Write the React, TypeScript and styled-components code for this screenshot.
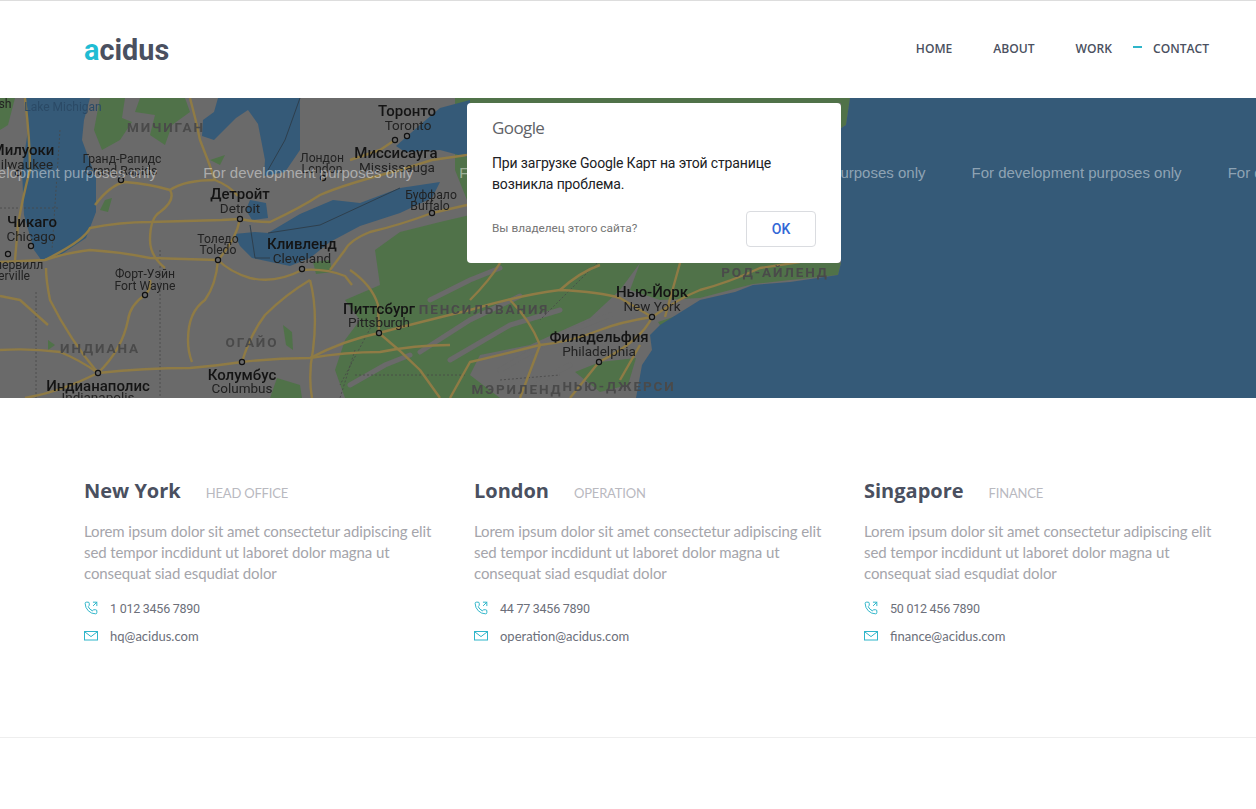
import React, { FC } from "react";
import styled, { createGlobalStyle } from "styled-components";
import { PhoneOutgoing } from "lucide-react";

const GlobalStyle = createGlobalStyle`
  html, body {
    margin: 0;
    padding: 0;
    background: #fff;
  }
`;

const Site = styled.div`
  width: 1256px;
  height: 809px;
  overflow: hidden;
  border-top: 1px solid #dddddd;
  box-sizing: border-box;
  font-family: Lato, sans-serif;
`;

const Header = styled.header`
  height: 97px;
  padding: 0 47px 0 84px;
  display: flex;
  align-items: center;
  justify-content: space-between;
`;

const Logo = styled.div`
  font: 700 28.8px Roboto, sans-serif;
  color: #4a5060;
  span {
    color: #1fbcd3;
  }
`;

const Nav = styled.nav`
  display: flex;
  gap: 41px;
  margin-top: -3px;
`;

const NavItem = styled.a<{ $active?: boolean }>`
  position: relative;
  font: 600 12.1px "Open Sans", sans-serif;
  color: #4a5060;
  ${({ $active }) =>
    $active &&
    `
    &::before {
      content: "";
      position: absolute;
      left: -20px;
      top: 6px;
      width: 9px;
      height: 2px;
      background: #2fb5c9;
    }
  `}
`;

const MapSection = styled.section`
  position: relative;
  height: 300px;
  overflow: hidden;
  background: #6a6a6a;
  svg {
    display: block;
    filter: blur(0.3px);
  }
`;

const DevNote = styled.div`
  position: absolute;
  top: 66px;
  left: -53px;
  display: flex;
  gap: 46px;
  white-space: nowrap;
  font: 15px "Liberation Sans", sans-serif;
  color: rgba(255, 255, 255, 0.45);
`;

const Dialog = styled.div`
  position: absolute;
  left: 467px;
  top: 5px;
  width: 374px;
  height: 160px;
  box-sizing: border-box;
  padding: 13px 25px 0;
  background: #fff;
  border-radius: 4px;
  font-family: Roboto, sans-serif;
`;

const GoogleMark = styled.div`
  font: 500 17px "Open Sans", sans-serif;
  letter-spacing: -0.6px;
  color: #5f6368;
  line-height: 23px;
`;

const DialogText = styled.p`
  margin: 14px 0 0;
  font-size: 14px;
  letter-spacing: -0.15px;
  line-height: 21px;
  color: #202124;
`;

const DialogFoot = styled.div`
  margin-top: 16px;
  display: flex;
  align-items: center;
  justify-content: space-between;
`;

const OwnerLink = styled.span`
  margin-bottom: 2px;
  font-size: 11.8px;
  color: #757575;
`;

const OkButton = styled.button`
  width: 70px;
  height: 36px;
  background: #fff;
  border: 1px solid #dadce0;
  border-radius: 4px;
  font: 500 14px Roboto, sans-serif;
  color: #3367d6;
`;

const Offices = styled.section`
  height: 340px;
  box-sizing: border-box;
  padding: 79px 0 0 84px;
  display: grid;
  grid-template-columns: repeat(3, 390px);
  align-content: start;
  border-bottom: 1px solid #eeeeee;
`;

const Office = styled.article`
  padding-right: 30px;
`;

const OfficeHead = styled.div`
  display: flex;
  align-items: baseline;
  gap: 25px;
`;

const City = styled.h3`
  margin: 0;
  font: 700 20px/28px "Open Sans", sans-serif;
  color: #4a5060;
`;

const Role = styled.span`
  font-size: 13px;
  letter-spacing: -0.2px;
  color: #b9b9bf;
`;

const Blurb = styled.p`
  margin: 16px 0 10px;
  font-size: 15px;
  letter-spacing: -0.1px;
  line-height: 21px;
  color: #a5a5ab;
  white-space: pre;
`;

const ContactRow = styled.div`
  display: flex;
  align-items: center;
  gap: 12px;
  height: 28px;
  font-size: 13px;
  color: #6c6f7a;
  svg {
    flex: none;
    width: 14px;
    height: 14px;
    color: #2fb5c9;
  }
`;

const PhoneNumber = styled.span`
  font: 12.5px Roboto, sans-serif;
  letter-spacing: -0.25px;
`;

type LabelKind = "city" | "sub" | "small" | "state" | "lake";

const Label = styled.text<{ $kind: LabelKind }>`
  font-family: Roboto, sans-serif;
  text-anchor: middle;
  font-size: ${({ $kind }) =>
    ({ city: 15, sub: 13.5, small: 12.2, state: 13.5, lake: 12 }[$kind])}px;
  font-weight: ${({ $kind }) => ($kind === "state" ? 700 : $kind === "city" ? 500 : 400)};
  letter-spacing: ${({ $kind }) => ($kind === "state" ? "1.9px" : "0")};
  fill: ${({ $kind }) =>
    $kind === "state"
      ? "#4a4a4a"
      : $kind === "lake"
      ? "#2b4a66"
      : $kind === "city"
      ? "#141414"
      : "#222222"};
`;

const labels: [string, number, number, LabelKind][] = [
  ["Lake Michigan", 63, 111, "lake"],
  ["sh", 5, 108, "small"],
  ["МИЧИГАН", 166, 132, "state"],
  ["Торонто", 407, 116, "city"],
  ["Toronto", 408, 130, "sub"],
  ["Милуоки", 23, 155, "city"],
  ["Milwaukee", 21, 169, "sub"],
  ["Гранд-Рапидс", 122, 163, "small"],
  ["Grand Rapids", 121, 175, "small"],
  ["Лондон", 322, 162, "small"],
  ["London", 322, 173, "small"],
  ["Миссисауга", 396, 158, "city"],
  ["Mississauga", 397, 172, "sub"],
  ["Детройт", 240, 199, "city"],
  ["Detroit", 240, 213, "sub"],
  ["Буффало", 431, 199, "small"],
  ["Buffalo", 430, 210, "small"],
  ["Чикаго", 32, 227, "city"],
  ["Chicago", 31, 241, "sub"],
  ["Толедо", 218, 243, "small"],
  ["Toledo", 218, 254, "small"],
  ["Кливленд", 302, 249, "city"],
  ["Cleveland", 302, 263, "sub"],
  ["Нейпервилл", 8, 269, "small"],
  ["Naperville", 3, 280, "small"],
  ["Форт-Уэйн", 145, 278, "small"],
  ["Fort Wayne", 145, 290, "small"],
  ["ИНДИАНА", 100, 353, "state"],
  ["ОГАЙО", 252, 347, "state"],
  ["Индианаполис", 98, 391, "city"],
  ["Indianapolis", 98, 402, "sub"],
  ["Колумбус", 242, 380, "city"],
  ["Columbus", 242, 393, "sub"],
  ["Питтсбург", 379, 314, "city"],
  ["Pittsburgh", 379, 327, "sub"],
  ["ПЕНСИЛЬВАНИЯ", 484, 314, "state"],
  ["Нью-Йорк", 652, 297, "city"],
  ["New York", 652, 311, "sub"],
  ["Филадельфия", 599, 342, "city"],
  ["Philadelphia", 599, 356, "sub"],
  ["МЭРИЛЕНД", 517, 394, "state"],
  ["НЬЮ-ДЖЕРСИ", 619, 391, "state"],
  ["РОД-АЙЛЕНД", 775, 277, "state"],
];

const cityDots = [
  [395, 140], [407, 136], [121, 180], [323, 178], [240, 219], [31, 246], [8, 254],
  [218, 260], [302, 269], [145, 295], [98, 373], [242, 362], [379, 333], [652, 317],
  [599, 362], [18, 173], [432, 213],
];

const water = [
  "M25 98L90 98L84 120L82 140L96 178L96 212L86 238L62 254L42 261L34 250L24 215L22 170L28 130Z",
  "M218 98L214 112L203 120L202 136L214 140L236 118L248 110L258 124L265 160L264 176L285 172L300 150L300 98Z",
  "M396 146L420 125L440 108L470 100L470 158L440 150L405 152Z",
  "M250 200L266 203L268 218L252 220L246 210Z",
  "M234 234L240 246L252 258L290 266L310 258L330 242L360 226L400 213L432 198L440 182L420 185L400 188L360 203L333 200L300 214L268 233L255 232Z",
  "M850 98L1256 98L1256 398L636 398L642 365L652 350L650 335L660 325L700 300L735 292L753 285L790 282L838 275L841 263L838 200L838 130L846 125Z",
];

const green = [
  "M100 98L125 98L122 118L132 122L120 140L102 150L94 130Z",
  "M140 98L185 98L190 112L172 125L165 145L150 135L155 115L135 112Z",
  "M210 160L225 155L220 165Z",
  "M105 200L112 198L108 212L100 210Z",
  "M48 340L55 345L48 350Z",
  "M375 250L400 232L440 222L470 215L470 263L640 263L620 290L590 318L530 345L480 355L470 375L500 398L345 398L335 370L345 340L360 320L345 300L380 285Z",
  "M640 263L841 263L838 275L790 280L753 284L700 298L660 300L630 290Z",
  "M658 322L700 308L747 295L735 305L690 322L662 328Z",
  "M0 98L15 98L8 125L0 130Z",
  "M575 372L600 362L636 358L628 385L600 392Z",
  "M1012 98L1088 98L1075 118L1050 132L1035 145L1020 140L1008 118Z",
  "M860 98L875 98L870 112L860 115Z",
  "M277 378L300 385L302 398L270 398Z",
  "M313 262L330 260L332 272L316 274Z",
  "M283 325L292 332L293 350L286 345Z",
  "M455 98L841 98L841 103L467 103L467 200L455 170Z",
  "M841 98L850 98L846 125L841 128Z",
];

const ridges = [
  "M420 352L470 320L520 296",
  "M450 360L510 325L560 310",
  "M500 370L560 335L610 315",
  "M430 300L470 280L500 268",
  "M350 385L385 365L410 355",
  "M520 398L550 375L570 365",
];

const roads = [
  "M45 260Q85 240 90 228Q120 222 150 222L222 220L240 219",
  "M95 205Q110 185 125 182Q150 184 170 190Q185 180 215 180Q230 186 238 196",
  "M170 190Q176 200 160 212Q150 218 150 240Q150 256 165 268",
  "M218 260Q230 272 250 278Q275 284 302 270Q325 268 345 276L352 285",
  "M218 260Q216 285 205 300Q188 312 188 340Q188 352 192 362",
  "M0 350Q30 348 60 352Q80 360 98 373Q145 368 190 368Q215 366 242 362Q275 358 310 358Q345 352 380 352Q415 345 450 345",
  "M98 373Q70 340 50 300Q46 280 46 268",
  "M98 373Q122 350 128 320Q130 305 145 295Q152 288 150 280",
  "M25 398Q60 392 98 373",
  "M242 362Q250 335 265 315Q285 295 310 280",
  "M310 280Q318 310 313 350Q308 375 312 398",
  "M350 270Q372 285 378 305L379 333Q400 350 420 370L440 398",
  "M379 333Q420 322 470 310Q520 295 560 290Q600 292 620 298L652 317",
  "M379 333Q345 340 310 358",
  "M652 317Q620 322 600 330Q570 342 540 345Q500 355 470 362L450 398",
  "M652 317Q642 340 599 362L570 398",
  "M652 317Q680 298 700 290Q730 282 760 268L800 262",
  "M560 290Q580 272 600 265M680 263L665 317M500 263Q490 280 470 300",
  "M240 219Q255 222 270 222Q300 208 320 195Q345 184 400 170L432 160L467 155",
  "M432 213Q400 225 370 232Q350 240 345 250L330 270",
  "M432 213L467 205M395 140L380 150L350 160",
  "M0 262L45 260Q70 252 90 250Q120 252 150 258L218 260",
  "M25 98Q30 140 30 170Q22 200 18 225L15 260",
  "M190 98Q196 120 200 140Q208 160 215 180",
  "M240 219Q236 240 218 260",
  "M0 296L20 300L48 325",
  "M620 380L640 345M520 398L540 345Q530 320 510 300",
];

const ContactData = [
  {
    city: "New York",
    role: "HEAD OFFICE",
    phone: "1 012 3456 7890",
    mail: "hq@acidus.com",
  },
  {
    city: "London",
    role: "OPERATION",
    phone: "44 77 3456 7890",
    mail: "operation@acidus.com",
  },
  {
    city: "Singapore",
    role: "FINANCE",
    phone: "50 012 456 7890",
    mail: "finance@acidus.com",
  },
];

const MailIcon: FC = () => (
  <svg viewBox="0 0 14 14" fill="none" stroke="currentColor" strokeWidth="1">
    <rect x="0.5" y="2.5" width="13" height="8.5" />
    <path d="M1 3l6 4.6L13 3" />
  </svg>
);

const MapDrawing: FC = () => (
  <svg width="1256" height="300" viewBox="0 98 1256 300">
    {green.map((d) => (
      <path key={d} d={d} fill="#507249" />
    ))}
    {ridges.map((d) => (
      <path key={d} d={d} fill="none" stroke="#6a6a6a" strokeWidth="5" strokeLinecap="round" />
    ))}
    {water.map((d) => (
      <path key={d} d={d} fill="#355a78" />
    ))}
    <path
      d="M300 98L285 140L268 170M268 233L320 225L400 188M250 225L255 258L270 258"
      fill="none"
      stroke="#2e3f4d"
      strokeWidth="1"
    />
    <path
      d="M0 208L58 208M60 130L52 250M36 398L36 290M160 250L160 398M355 350L340 398M355 375L467 375M380 310L340 385M500 380L560 375M600 260L540 320"
      fill="none"
      stroke="#474747"
      strokeWidth="0.8"
      strokeDasharray="2 2"
    />
    {roads.map((d) => (
      <path key={d} d={d} fill="none" stroke="#8f7b45" strokeWidth="2.4" strokeLinejoin="round" />
    ))}
    {cityDots.map(([x, y]) => (
      <circle key={`${x}-${y}`} cx={x} cy={y} r="2.6" fill="#6a6a6a" stroke="#111" strokeWidth="1.2" />
    ))}
    {labels.map(([text, x, y, kind]) => (
      <Label key={text} x={x} y={y} $kind={kind}>
        {text}
      </Label>
    ))}
  </svg>
);

export default function App() {
  return (
    <Site>
      <GlobalStyle />
      <Header>
        <Logo>
          <span>a</span>cidus
        </Logo>
        <Nav>
          <NavItem>HOME</NavItem>
          <NavItem>ABOUT</NavItem>
          <NavItem>WORK</NavItem>
          <NavItem $active>CONTACT</NavItem>
        </Nav>
      </Header>
      <MapSection>
        <MapDrawing />
        <DevNote>
          {[0, 1, 2, 3, 4, 5].map((n) => (
            <span key={n}>For development purposes only</span>
          ))}
        </DevNote>
        <Dialog>
          <GoogleMark>Google</GoogleMark>
          <DialogText>
            При загрузке Google Карт на этой странице
            <br />
            возникла проблема.
          </DialogText>
          <DialogFoot>
            <OwnerLink>Вы владелец этого сайта?</OwnerLink>
            <OkButton>OK</OkButton>
          </DialogFoot>
        </Dialog>
      </MapSection>
      <Offices>
        {ContactData.map((office) => (
          <Office key={office.city}>
            <OfficeHead>
              <City>{office.city}</City>
              <Role>{office.role}</Role>
            </OfficeHead>
            <Blurb>
              {"Lorem ipsum dolor sit amet consectetur adipiscing elit\nsed tempor incdidunt ut laboret dolor magna ut\nconsequat siad esqudiat dolor"}
            </Blurb>
            <ContactRow>
              <PhoneOutgoing strokeWidth={1.7} />
              <PhoneNumber>{office.phone}</PhoneNumber>
            </ContactRow>
            <ContactRow>
              <MailIcon />
              {office.mail}
            </ContactRow>
          </Office>
        ))}
      </Offices>
    </Site>
  );
}
